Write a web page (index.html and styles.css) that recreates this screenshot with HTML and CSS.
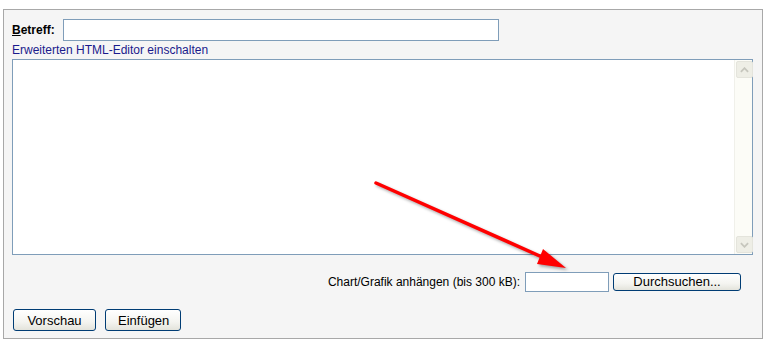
FILE: index.html
```html
<!DOCTYPE html>
<html>
<head>
    <title>Beitrag schreiben</title>
    <link rel="stylesheet" href="styles.css">
</head>
<body>
    <div class="panel">
        <div class="subject-row">
            <label class="subject-label" for="subject"><u>B</u>etreff:</label>
            <input type="text" id="subject" class="subject-input">
        </div>
        <a class="editor-link" href="#">Erweiterten HTML-Editor einschalten</a>
        <div class="editor">
            <div class="editor-text"></div>
            <div class="scrollbar">
                <span class="scroll-btn">
                    <svg viewBox="0 0 10 6" width="9" height="6"><polyline points="1,5 5,1 9,5" fill="none" stroke="#c6c6bd" stroke-width="2"/></svg>
                </span>
                <span class="scroll-btn">
                    <svg viewBox="0 0 10 6" width="9" height="6"><polyline points="1,1 5,5 9,1" fill="none" stroke="#c6c6bd" stroke-width="2"/></svg>
                </span>
            </div>
        </div>
        <div class="upload-row">
            <span class="upload-label">Chart/Grafik anhängen (bis 300 kB):</span>
            <input type="text" class="upload-input">
            <button class="btn browse-btn">Durchsuchen...</button>
        </div>
        <div class="actions">
            <button class="btn">Vorschau</button>
            <button class="btn">Einfügen</button>
        </div>

        <!-- annotation arrow -->
        <svg class="arrow" width="220" height="110" viewBox="0 0 220 110">
            <line x1="6" y1="6" x2="172" y2="80" stroke="#ff0000" stroke-width="3.5" stroke-linecap="round"/>
            <polygon points="196,91 173,72 167,87" fill="#ff0000"/>
        </svg>
    </div>
</body>
</html>
```

FILE: styles.css
```css
body {
    margin: 0;
    font-family: "Liberation Sans", Arial, sans-serif;
    font-size: 12px;
    color: #000;
    background-color: #fff;
}

.panel {
    position: relative;
    width: 742px;
    height: 310px;
    margin: 9px 0 0 3px;
    padding: 9px 8px 9px 8px;
    background-color: #f5f5f5;
    border: 1px solid #a8a8a8;
}

.subject-row {
    display: flex;
    align-items: center;
    height: 22px;
}

.subject-label {
    width: 51px;
    font-weight: bold;
}

.subject-input {
    width: 430px;
    height: 16px;
    margin: 0;
    padding: 2px;
    border: 1px solid #7f9db9;
    background-color: #fff;
}

.editor-link {
    display: block;
    margin-top: 1px;
    height: 16px;
    line-height: 16px;
    color: #1a1a8c;
    text-decoration: none;
}

.editor {
    display: flex;
    width: 739px;
    height: 194px;
    margin-top: 1px;
    border: 1px solid #7f9db9;
    background-color: #fff;
}

.editor-text {
    flex: 1;
}

.scrollbar {
    display: flex;
    flex-direction: column;
    justify-content: space-between;
    width: 17px;
    padding: 1px 0 1px 0;
    background-color: #fcfcf7;
    border-left: 1px solid #f0f0ea;
}

.scroll-btn {
    display: flex;
    align-items: center;
    justify-content: center;
    width: 15px;
    height: 15px;
    margin-left: 1px;
    background-color: #eeeee6;
    border: 1px solid #e4e4dc;
    border-radius: 2px;
}

.upload-row {
    display: flex;
    justify-content: flex-end;
    align-items: center;
    height: 20px;
    margin-top: 17px;
    padding-right: 13px;
}

.upload-label {
    margin-right: 5px;
}

.upload-input {
    width: 78px;
    height: 14px;
    margin: 0 4px 0 0;
    padding: 2px;
    border: 1px solid #7f9db9;
    background-color: #fff;
}

.btn {
    height: 22px;
    margin: 0;
    padding: 0 12px;
    font-family: "Liberation Sans", Arial, sans-serif;
    font-size: 13px;
    color: #000;
    border: 1px solid #003c74;
    border-radius: 3px;
    background: linear-gradient(#ffffff, #f4f4f0 60%, #e3e3db);
}

.browse-btn {
    width: 128px;
    height: 18px;
    line-height: 14px;
}

.actions {
    display: flex;
    gap: 9px;
    margin-top: 17px;
    padding-left: 1px;
}

.actions .btn:first-child {
    width: 83px;
}

.actions .btn:last-child {
    width: 76px;
}

.arrow {
    position: absolute;
    left: 366px;
    top: 167px;
    overflow: visible;
    filter: drop-shadow(2px 2px 1.5px rgba(0, 0, 0, 0.35));
}
```
